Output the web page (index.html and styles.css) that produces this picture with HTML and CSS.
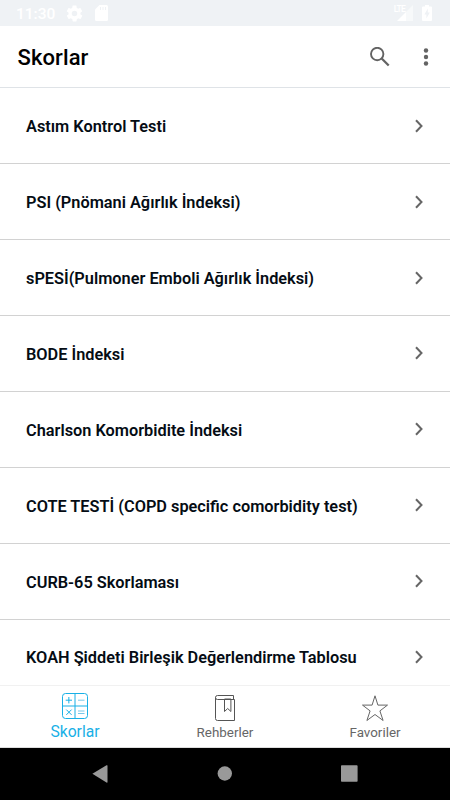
FILE: index.html
```
<!DOCTYPE html>
<html lang="tr">
<head>
    <meta charset="UTF-8">
    <meta name="viewport" content="width=device-width, initial-scale=1.0">
    <title>Skorlar</title>
    <link rel="stylesheet" href="styles.css">
</head>
<body>
    <!-- Status bar -->
    <div class="status-bar">
        <span class="clock">11:30</span>
        <svg class="gear" width="19" height="19" viewBox="0 0 24 24"><path fill="#fff" fill-rule="evenodd" d="M19.4 13c0-.3.1-.6.1-1s0-.7-.1-1l2.1-1.6c.2-.2.2-.4.1-.6l-2-3.5c-.1-.2-.4-.3-.6-.2l-2.5 1c-.5-.4-1.1-.7-1.7-1L14.5 2.4c0-.2-.2-.4-.5-.4h-4c-.2 0-.5.2-.5.4L9.1 5.1c-.6.2-1.2.6-1.7 1l-2.5-1c-.2-.1-.5 0-.6.2l-2 3.5c-.1.2-.1.5.1.6L4.6 11c0 .3-.1.6-.1 1s0 .7.1 1l-2.1 1.6c-.2.2-.2.4-.1.6l2 3.5c.1.2.4.3.6.2l2.5-1c.5.4 1.1.7 1.7 1l.4 2.7c0 .2.3.4.5.4h4c.3 0 .5-.2.5-.4l.4-2.7c.6-.2 1.2-.6 1.7-1l2.5 1c.2.1.5 0 .6-.2l2-3.5c.1-.2.1-.5-.1-.6zM12 15.500a3.5 3.5 0 1 1 0-7 3.5 3.5 0 0 1 0 7z"/></svg>
        <svg class="sd-card" width="13" height="16" viewBox="0 0 13 16"><path fill="#fff" d="M4.5 0H11.5Q13 0 13 1.5V14.5Q13 16 11.5 16H1.5Q0 16 0 14.5V4.5z"/><path stroke="#eff2f5" stroke-width="1" d="M5.5 2v3M8 2v3M10.5 2v3"/></svg>
        <div class="status-right">
            <span class="lte">LTE</span>
            <svg class="signal" width="16" height="16" viewBox="0 0 16 16"><path fill="#f7f9fa" d="M16 0V16H9V7z"/><path fill="#fff" d="M9 7V16H0z"/></svg>
            <svg class="battery" width="10" height="16" viewBox="0 0 10 16"><path fill="#fff" d="M3 0h4v1.500h2q1 0 1 1V15q0 1-1 1H1q-1 0-1-1V2.500q0-1 1-1h2z"/><path fill="#eff2f5" d="M5.8 3.500v4h2L4.4 13.500V9.500h-2z"/></svg>
        </div>
    </div>

    <!-- Header -->
    <header class="app-bar">
        <h1>Skorlar</h1>
        <svg class="search" width="20" height="20" viewBox="0 0 20 20"><circle cx="7.2" cy="7" r="6.2" fill="none" stroke="#636363" stroke-width="1.9"/><path stroke="#636363" stroke-width="2.3" d="M11.7 11.5L18.7 18.5"/></svg>
        <svg class="more" width="6" height="18" viewBox="0 0 6 18"><g fill="#636363"><circle cx="3" cy="2.5" r="2.2"/><circle cx="3" cy="9" r="2.2"/><circle cx="3" cy="15.500" r="2.2"/></g></svg>
    </header>

    <!-- Score list -->
    <ul class="score-list">
        <li><span>Astım Kontrol Testi</span><svg class="chevron" viewBox="0 0 8 14"><path d="M1 1.300L6.500 7L1 12.700"/></svg></li>
        <li><span>PSI (Pnömani Ağırlık İndeksi)</span><svg class="chevron" viewBox="0 0 8 14"><path d="M1 1.300L6.500 7L1 12.700"/></svg></li>
        <li><span>sPESİ(Pulmoner Emboli Ağırlık İndeksi)</span><svg class="chevron" viewBox="0 0 8 14"><path d="M1 1.300L6.500 7L1 12.700"/></svg></li>
        <li><span>BODE İndeksi</span><svg class="chevron" viewBox="0 0 8 14"><path d="M1 1.300L6.500 7L1 12.700"/></svg></li>
        <li><span>Charlson Komorbidite İndeksi</span><svg class="chevron" viewBox="0 0 8 14"><path d="M1 1.300L6.500 7L1 12.700"/></svg></li>
        <li><span lang="en">COTE TESTİ (COPD specific comorbidity test)</span><svg class="chevron" viewBox="0 0 8 14"><path d="M1 1.300L6.500 7L1 12.700"/></svg></li>
        <li><span>CURB-65 Skorlaması</span><svg class="chevron" viewBox="0 0 8 14"><path d="M1 1.300L6.500 7L1 12.700"/></svg></li>
        <li><span>KOAH Şiddeti Birleşik Değerlendirme Tablosu</span><svg class="chevron" viewBox="0 0 8 14"><path d="M1 1.300L6.500 7L1 12.700"/></svg></li>
    </ul>

    <!-- Bottom tabs -->
    <nav class="tabs">
        <a class="tab active">
            <svg width="28" height="28" viewBox="0 0 28 28" fill="none" stroke="#18b0e6"><rect x="1.5" y="1.5" width="25" height="25" rx="3"/><path d="M14 1.500V26.500M1.500 14H26.500M4.700 8.200H11M7.850 5V11.400M5.300 17.600L10.600 22.900M10.600 17.600L5.300 22.900"/><path stroke="#79c8e9" d="M17 8.200H23.500M17 19H23.500M17 21.500H23.500"/></svg>
            <span>Skorlar</span>
        </a>
        <a class="tab">
            <svg width="28" height="28" viewBox="0 0 28 28" fill="none" stroke="#555"><path d="M22.500 5.500V1.500H6.500Q4.500 1.500 4.500 3.500V24.500Q4.500 26.500 6.500 26.500H23.500V5.500H6.500Q4.500 5.500 4.500 3.500"/><path d="M13.500 5V17.500L16.700 14.500L19.900 17.500V5z"/></svg>
            <span>Rehberler</span>
        </a>
        <a class="tab">
            <svg width="28" height="28" viewBox="0 0 28 28" fill="none" stroke="#666"><path d="M14 1.800L16.900 11.100H26.500L18.900 16.900L22.100 26.500L14 20.500L5.900 26.500L9.100 16.900L1.500 11.100H11.100z"/></svg>
            <span>Favoriler</span>
        </a>
    </nav>

    <!-- Android navigation buttons -->
    <div class="system-nav">
        <svg width="18" height="20" viewBox="0 0 18 20"><path fill="#999" d="M1.400 9.700L15.500 1.300Q16.500 .8 16.500 1.800V18Q16.500 19.100 15.500 18.500z"/></svg>
        <svg width="18" height="20" viewBox="0 0 18 20"><circle cx="8.8" cy="9.5" r="7.2" fill="#999"/></svg>
        <svg width="18" height="20" viewBox="0 0 18 20"><rect x="0" y="1.2" width="16.6" height="16.6" rx=".8" fill="#999"/></svg>
    </div>
</body>
</html>
```
FILE: styles.css
```
body {
    font-family: Roboto, 'Noto Sans', sans-serif;
    margin: 0;
    height: 800px;
    display: flex;
    flex-direction: column;
    overflow: hidden;
    background-color: #fff;
}

svg {
    display: block;
    flex: none;
}

.status-bar {
    height: 26px;
    flex: none;
    box-sizing: border-box;
    padding: 0 18px 0 16px;
    display: flex;
    align-items: center;
    background-color: #eff2f5;
    color: #fff;
}

.clock {
    width: 49px;
    font-size: 15.5px;
    font-weight: 500;
    line-height: 20px;
    padding-top: 2px;
}

.sd-card {
    margin-left: 11px;
}

.status-right {
    margin-left: auto;
    display: flex;
}

.lte {
    font-size: 8.5px;
    font-weight: 500;
    line-height: 9px;
    letter-spacing: -0.8px;
    margin-right: -8px;
}

.battery {
    margin-left: 9px;
}

.app-bar {
    height: 62.3px;
    flex: none;
    box-sizing: border-box;
    padding: 0 21px 0 17.5px;
    display: flex;
    align-items: center;
    border-bottom: 1px solid #dfe3e7;
}

.app-bar h1 {
    margin: 0;
    flex: 1;
    font-size: 22px;
    font-weight: 500;
    letter-spacing: 0.1px;
    line-height: 26px;
    padding-top: 3px;
}

.more {
    margin-left: 33px;
}

.score-list {
    list-style: none;
    margin: 0;
    padding: 0;
    flex: 1;
    min-height: 0;
    overflow: hidden;
}

.score-list li {
    height: 75.9px;
    box-sizing: border-box;
    padding: 0 27px 0 26px;
    display: flex;
    align-items: center;
    justify-content: space-between;
    border-bottom: 1px solid #d2d2d2;
    color: #050c14;
    font-weight: 600;
    white-space: nowrap;
}

.score-list span {
    font-size: 16.32px;
    padding-top: 2px;
}

.chevron {
    width: 8px;
    height: 14px;
    fill: none;
    stroke: #666;
    stroke-width: 2;
}

.tabs {
    height: 63px;
    flex: none;
    box-sizing: border-box;
    display: flex;
    border-top: 1px solid #f1f1f1;
    border-bottom: 1px solid #ddd;
}

.tab {
    flex: 1;
    padding-top: 8px;
    display: flex;
    flex-direction: column;
    align-items: center;
    color: #666;
    font-size: 13.4px;
    line-height: 20px;
}

.tab span {
    padding-top: 1px;
}

.tab.active {
    padding-top: 6px;
    color: #18b0e6;
    font-size: 15.7px;
}

.tab.active span {
    padding-top: 2px;
}

.system-nav {
    height: 52px;
    flex: none;
    box-sizing: border-box;
    padding: 0 91px;
    display: flex;
    justify-content: space-between;
    align-items: center;
    background-color: #000;
}
```
